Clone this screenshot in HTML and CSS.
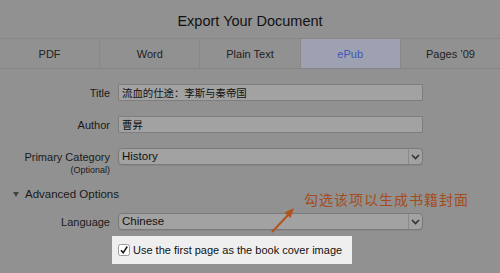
FILE: index.html
```html
<!DOCTYPE html>
<html>
<head>
<meta charset="utf-8">
<link rel="stylesheet" href="styles.css">
</head>
<body>
<div class="dialog">
  <div class="header">Export Your Document</div>
  <div class="tabs">
    <div class="tab">PDF</div>
    <div class="tab">Word</div>
    <div class="tab">Plain Text</div>
    <div class="tab active">ePub</div>
    <div class="tab">Pages ’09</div>
  </div>
  <div class="form">
    <div class="row r-title">
      <div class="label">Title</div>
      <div class="field cjk">流血的仕途：李斯与秦帝国</div>
    </div>
    <div class="row r-author">
      <div class="label">Author</div>
      <div class="field cjk">曹昇</div>
    </div>
    <div class="row r-cat">
      <div class="label">Primary Category</div>
      <div class="field select">History<span class="chev"><svg width="9" height="6" viewBox="0 0 9 6"><path d="M1 1 L4.5 4.5 L8 1" fill="none" stroke="#333" stroke-width="1.6"/></svg></span></div>
    </div>
    <div class="optional">(Optional)</div>
    <div class="adv"><span class="tri"></span>Advanced Options</div>
    <div class="row r-lang">
      <div class="label">Language</div>
      <div class="field select">Chinese<span class="chev"><svg width="9" height="6" viewBox="0 0 9 6"><path d="M1 1 L4.5 4.5 L8 1" fill="none" stroke="#333" stroke-width="1.6"/></svg></span></div>
    </div>
    <div class="cover">
      <span class="box"><svg width="10" height="10" viewBox="0 0 10 10"><path d="M2 5.2 L4.2 7.8 L8.2 1.5" fill="none" stroke="#111" stroke-width="1.5"/></svg></span>
      <span>Use the first page as the book cover image</span>
    </div>
  </div>
  <div class="note">勾选该项以生成书籍封面</div>
  <svg class="arrow" width="40" height="40" viewBox="0 0 40 40">
    <path d="M4 34 L22 15" stroke="#b4521c" stroke-width="2" fill="none"/>
    <path d="M26 10 L16.5 14.5 L22.5 20 Z" fill="#b4521c"/>
  </svg>
</div>
</body>
</html>
```

FILE: styles.css
```css
* { box-sizing: border-box; }
html, body { margin: 0; padding: 0; }
body {
  width: 500px;
  height: 273px;
  overflow: hidden;
  background: #919191;
  font-family: "Liberation Sans", Arial, "Noto Sans CJK SC", sans-serif;
  color: #1a1a1a;
}
.dialog {
  position: relative;
  width: 500px;
  height: 273px;
}
.header {
  height: 38px;
  display: flex;
  align-items: center;
  justify-content: center;
  font-size: 14.5px;
  padding-top: 4px;
  color: #111;
}
.tabs {
  display: flex;
  height: 31px;
  border-top: 1px solid #878787;
  border-bottom: 1px solid #858585;
}
.tab {
  flex: 1;
  display: flex;
  align-items: center;
  justify-content: center;
  font-size: 11px;
  color: #222;
  border-left: 1px solid #898989;
}
.tab:first-child { border-left: none; }
.tab.active {
  background: #9ea1b2;
  color: #3e56b8;
}
.form {
  padding-top: 15px;
}
.row {
  display: flex;
  align-items: center;
  height: 17px;
}
.label {
  width: 110px;
  text-align: right;
  font-size: 11px;
  color: #1a1a1a;
}
.field {
  margin-left: 8px;
  width: 305px;
  height: 17px;
  background: #a2a2a2;
  border: 1px solid #7e7e7e;
  border-radius: 1px;
  font-size: 11.5px;
  line-height: 15px;
  padding-left: 3px;
  color: #111;
  font-family: "Liberation Sans", "Noto Sans CJK SC", sans-serif;
  position: relative;
}
.field.cjk {
  font-size: 10.4px;
  font-family: "Noto Sans CJK SC", sans-serif;
}
.select {
  border-radius: 4px;
  border-color: #7a7a7a;
  box-shadow: 0 1px 0 #888;
}
.chev {
  position: absolute;
  right: 0;
  top: 0;
  width: 14px;
  height: 15px;
  border-left: 1px solid #8a8a8a;
  display: flex;
  align-items: center;
  justify-content: center;
}
.r-author { margin-top: 15px; }
.r-cat { margin-top: 15px; }
.optional {
  width: 110px;
  text-align: right;
  font-size: 9px;
  line-height: 10px;
  margin-top: 0;
  color: #1a1a1a;
}
.adv {
  display: flex;
  align-items: center;
  margin-top: 12px;
  padding-left: 13px;
  font-size: 11.5px;
  height: 14px;
}
.tri {
  width: 0;
  height: 0;
  border-left: 3.5px solid transparent;
  border-right: 3.5px solid transparent;
  border-top: 5px solid #444;
  margin-right: 6px;
}
.r-lang { margin-top: 12px; }
.cover {
  margin-top: 6px;
  margin-left: 112px;
  width: 240px;
  height: 28px;
  background: #efefef;
  display: flex;
  align-items: center;
  padding-left: 6px;
  font-size: 11px;
  color: #111;
}
.box {
  width: 12px;
  height: 12px;
  background: #fff;
  border: 1px solid #9a9a9a;
  border-radius: 2.5px;
  display: flex;
  align-items: center;
  justify-content: center;
  margin-right: 3px;
}
.note {
  position: absolute;
  left: 304px;
  top: 191px;
  font-size: 14px;
  letter-spacing: 1px;
  color: #a44c1c;
  font-family: "Noto Sans CJK SC", sans-serif;
  line-height: 16px;
}
.arrow {
  position: absolute;
  left: 268px;
  top: 198px;
}
```
